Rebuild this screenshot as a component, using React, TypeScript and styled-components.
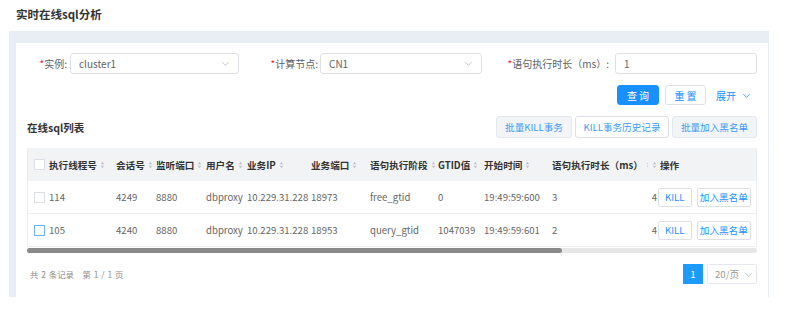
import React from "react";
import styled, { createGlobalStyle } from "styled-components";

const GlobalStyle = createGlobalStyle`
  html, body { margin: 0; padding: 0; background: #fff; }
  body {
    font-family: "Noto Sans CJK SC", "Noto Sans", sans-serif;
    color: #333;
  }
  * { box-sizing: border-box; }
`;

const COLS = "86px 40px 50px 41px 64px 59px 68px 46px 68px 98px 9px 1fr";

const Page = styled.div`
  width: 795px;
  height: 315px;
  overflow: hidden;
`;

const Title = styled.div`
  height: 31px;
  padding-left: 16px;
  line-height: 28px;
  font-size: 11.5px;
  font-weight: 700;
  color: #333;
`;

const Panel = styled.div`
  margin-left: 9px;
  width: 760px;
  height: 266px;
  padding: 12px 1px 0 7px;
  background: #e9edf4;
`;

const Card = styled.div`
  height: 254px;
  background: #fff;
  padding: 10px 11px 0 11px;
`;

const FormRow = styled.div`
  display: grid;
  grid-template-columns: 212px 243px 1fr;
  height: 21px;
`;

const FormItem = styled.div<{ $input: number; $gap: number }>`
  display: grid;
  grid-template-columns: 1fr ${(p) => p.$input}px;
  column-gap: ${(p) => p.$gap}px;
  align-items: center;
`;

const Label = styled.label`
  text-align: right;
  font-size: 10px;
  color: #606266;
  white-space: nowrap;
  &::before {
    content: "*";
    color: #f5222d;
  }
`;

const Field = styled.div`
  height: 21px;
  border: 1px solid #dcdfe6;
  border-radius: 3px;
  display: flex;
  align-items: center;
  justify-content: space-between;
  padding: 0 8px 0 8px;
  font-size: 10px;
  color: #606266;
`;

const Chevron = ({ size = 9, color = "#b4b8bf" }: { size?: number; color?: string }) => (
  <svg width={size} height={size} viewBox="0 0 10 10" fill="none">
    <path d="M1.5 3.5 L5 7 L8.5 3.5" stroke={color} strokeWidth="0.9" />
  </svg>
);

const ActionsRow = styled.div`
  margin-top: 11px;
  height: 20px;
  display: flex;
  justify-content: flex-end;
  align-items: center;
  padding-right: 6px;
`;

const Button = styled.button<{ $primary?: boolean; $w: number }>`
  width: ${(p) => p.$w}px;
  height: 20px;
  margin-left: 6px;
  border-radius: 3px;
  font-family: inherit;
  font-size: 10px;
  letter-spacing: 2px;
  padding: 0 0 0 2px;
  cursor: pointer;
  border: 1px solid ${(p) => (p.$primary ? "#1890ff" : "#dcdfe6")};
  background: ${(p) => (p.$primary ? "#1890ff" : "#fff")};
  color: ${(p) => (p.$primary ? "#fff" : "#1890ff")};
`;

const Expand = styled.span`
  margin-left: 10px;
  display: inline-flex;
  align-items: center;
  gap: 6px;
  font-size: 10px;
  color: #1890ff;
`;

const SectionHead = styled.div`
  margin-top: 11px;
  height: 22px;
  display: flex;
  align-items: center;
  justify-content: space-between;
`;

const SectionTitle = styled.div`
  font-size: 10.5px;
  font-weight: 700;
  color: #333;
`;

const ToolButtons = styled.div`
  display: flex;
  gap: 3px;
`;

const ToolButton = styled.button<{ $w: number; $muted?: boolean }>`
  width: ${(p) => p.$w}px;
  height: 22px;
  border-radius: 3px;
  border: 1px solid ${(p) => (p.$muted ? "#e4e7ec" : "#dcdfe6")};
  background: ${(p) => (p.$muted ? "#f2f4f7" : "#fff")};
  color: #3a9bf0;
  font-family: inherit;
  font-size: 9.6px;
  padding: 0;
  white-space: nowrap;
`;

const Table = styled.div`
  margin-top: 10px;
  border-left: 1px solid #ebeef5;
  border-right: 1px solid #ebeef5;
`;

const HeadRow = styled.div`
  display: grid;
  grid-template-columns: ${COLS};
  height: 33px;
  align-items: center;
  background: #f2f3f5;
  font-size: 9.6px;
  font-weight: 700;
  color: #333;
`;

const BodyRow = styled.div`
  display: grid;
  grid-template-columns: ${COLS};
  height: 33px;
  align-items: center;
  border-bottom: 1px solid #ebeef5;
  font-size: 9.6px;
  color: #666;
`;

const Cell = styled.div<{ $right?: boolean; $pad?: number }>`
  display: flex;
  align-items: center;
  justify-content: ${(p) => (p.$right ? "flex-end" : "flex-start")};
  padding-left: ${(p) => p.$pad ?? 2}px;
  white-space: nowrap;
  overflow: hidden;
`;

const Check = styled.span<{ $active?: boolean }>`
  display: inline-block;
  width: 11px;
  height: 11px;
  border: 1px solid ${(p) => (p.$active ? "#6cb2f5" : "#dcdfe6")};
  background: #fff;
  margin-right: 4px;
  flex: none;
`;

const SortIcon = () => (
  <svg width="5" height="8" viewBox="0 0 5 8" style={{ marginLeft: 3, flex: "none" }}>
    <path d="M2.5 0.8 L4.3 3.2 L0.7 3.2 Z" fill="#c0c4cc" />
    <path d="M2.5 7.2 L4.3 4.8 L0.7 4.8 Z" fill="#c0c4cc" />
  </svg>
);

const OpButton = styled.button<{ $w: number }>`
  width: ${(p) => p.$w}px;
  height: 19px;
  margin-right: 5px;
  border: 1px solid #dcdfe6;
  border-radius: 2px;
  background: #fff;
  color: #1890ff;
  font-family: inherit;
  font-size: 9.6px;
  padding: 0;
`;

const ScrollTrack = styled.div`
  margin-top: 1px;
  height: 5px;
  border-radius: 3px;
  background: #e6e6e6;
  display: flex;
`;

const ScrollThumb = styled.div`
  height: 5px;
  border-radius: 3px;
  background: #8a8a8a;
`;

const Footer = styled.div`
  margin-top: 11px;
  height: 20px;
  display: flex;
  align-items: center;
  justify-content: space-between;
`;

const Summary = styled.div`
  padding-left: 3px;
  font-size: 8.4px;
  color: #8c8c8c;
  word-spacing: 1px;
`;

const Pager = styled.div`
  display: flex;
  gap: 4px;
`;

const PageNum = styled.div`
  width: 20px;
  height: 20px;
  background: #1c9bfa;
  color: #fff;
  font-size: 9.6px;
  display: flex;
  align-items: center;
  justify-content: center;
`;

const SizeSelect = styled.div`
  width: 50px;
  height: 20px;
  border: 1px solid #e4e7ed;
  border-radius: 2px;
  display: flex;
  align-items: center;
  justify-content: space-between;
  padding: 0 3px 0 7px;
  font-size: 9.6px;
  color: #999;
`;

type Row = {
  id: string;
  session: string;
  port: string;
  user: string;
  ip: string;
  bizPort: string;
  stage: string;
  gtid: string;
  start: string;
  dur: string;
  hidden: string;
  active?: boolean;
};

const rows: Row[] = [
  { id: "114", session: "4249", port: "8880", user: "dbproxy", ip: "10.229.31.228", bizPort: "18973", stage: "free_gtid", gtid: "0", start: "19:49:59:600", dur: "3", hidden: "4" },
  { id: "105", session: "4240", port: "8880", user: "dbproxy", ip: "10.229.31.228", bizPort: "18953", stage: "query_gtid", gtid: "1047039", start: "19:49:59:601", dur: "2", hidden: "4", active: true },
];

const headers = ["会话号", "监听端口", "用户名", "业务IP", "业务端口", "语句执行阶段", "GTID值", "开始时间", "语句执行时长（ms）"];

export default function App() {
  return (
    <Page>
      <GlobalStyle />
      <Title>实时在线sql分析</Title>
      <Panel>
        <Card>
          <FormRow>
            <FormItem $input={169} $gap={3}>
              <Label>实例:</Label>
              <Field>
                cluster1
                <Chevron />
              </Field>
            </FormItem>
            <FormItem $input={162} $gap={2}>
              <Label>计算节点:</Label>
              <Field>
                CN1
                <Chevron />
              </Field>
            </FormItem>
            <FormItem $input={142} $gap={6}>
              <Label>语句执行时长（ms）:</Label>
              <Field>1</Field>
            </FormItem>
          </FormRow>

          <ActionsRow>
            <Button $primary $w={42}>查询</Button>
            <Button $w={41}>重置</Button>
            <Expand>
              展开
              <Chevron size={9} color="#1890ff" />
            </Expand>
          </ActionsRow>

          <SectionHead>
            <SectionTitle>在线sql列表</SectionTitle>
            <ToolButtons>
              <ToolButton $w={76} $muted>批量KILL事务</ToolButton>
              <ToolButton $w={94}>KILL事务历史记录</ToolButton>
              <ToolButton $w={85} $muted>批量加入黑名单</ToolButton>
            </ToolButtons>
          </SectionHead>

          <Table>
            <HeadRow>
              <Cell $pad={6}>
                <Check />
                执行线程号
                <SortIcon />
              </Cell>
              {headers.map((h) => (
                <Cell key={h}>
                  {h}
                  <SortIcon />
                </Cell>
              ))}
              <Cell $pad={0} $right>
                <SortIcon />
              </Cell>
              <Cell $pad={3}>操作</Cell>
            </HeadRow>
            {rows.map((r) => (
              <BodyRow key={r.id}>
                <Cell $pad={6}>
                  <Check $active={r.active} />
                  {r.id}
                </Cell>
                <Cell>{r.session}</Cell>
                <Cell>{r.port}</Cell>
                <Cell>{r.user}</Cell>
                <Cell>{r.ip}</Cell>
                <Cell>{r.bizPort}</Cell>
                <Cell>{r.stage}</Cell>
                <Cell>{r.gtid}</Cell>
                <Cell>{r.start}</Cell>
                <Cell>{r.dur}</Cell>
                <Cell $right $pad={0}>{r.hidden}</Cell>
                <Cell $pad={1}>
                  <OpButton $w={34}>KILL</OpButton>
                  <OpButton $w={55}>加入黑名单</OpButton>
                </Cell>
              </BodyRow>
            ))}
          </Table>
          <ScrollTrack>
            <ScrollThumb style={{ width: `${(534 / 729) * 100}%` }} />
          </ScrollTrack>

          <Footer>
            <Summary>共 2 条记录 &nbsp; 第 1 / 1 页</Summary>
            <Pager>
              <PageNum>1</PageNum>
              <SizeSelect>
                20/页
                <Chevron size={9} />
              </SizeSelect>
            </Pager>
          </Footer>
        </Card>
      </Panel>
    </Page>
  );
}
